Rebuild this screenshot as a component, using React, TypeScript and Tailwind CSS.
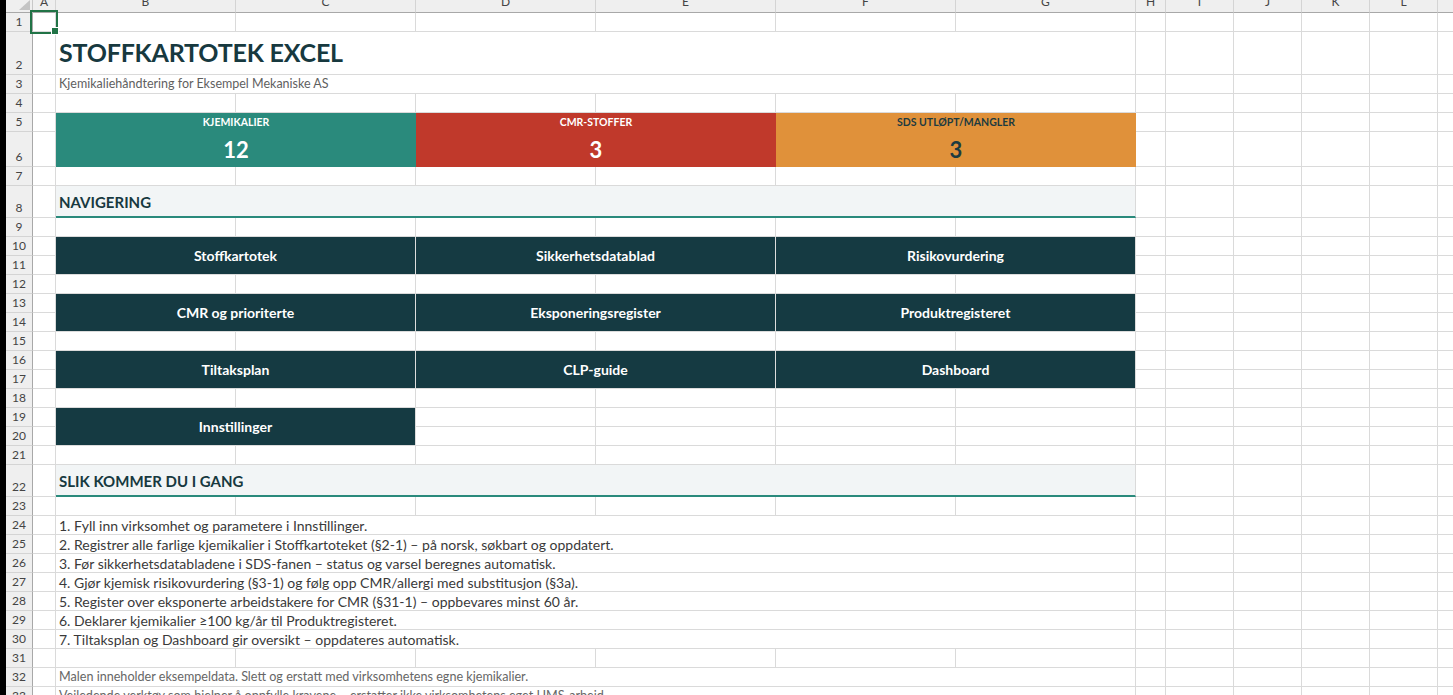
import type { ReactNode } from "react";

const G = "border-[#dadada]";
const H19 = "h-[19px]";
const SIX = [0, 1, 2, 3, 4, 5];
const LETTERS: [string, string][] = [
  ["A", "w-[23px]"],
  ["B", "w-[180px]"],
  ["C", "w-[180px]"],
  ["D", "w-[180px]"],
  ["E", "w-[180px]"],
  ["F", "w-[180px]"],
  ["G", "w-[180px]"],
  ["H", "w-[30px]"],
  ["I", "w-[68px]"],
  ["J", "w-[68px]"],
  ["K", "w-[68px]"],
  ["L", "w-[68px]"],
  ["M", "w-[68px]"],
];

function Col({ w, hs }: { w: string; hs: string[] }) {
  return (
    <div className={`${w} flex shrink-0 flex-col`}>
      {hs.map((h, i) => (
        <div key={i} className={`${h} border-b border-r ${G} bg-white`} />
      ))}
    </div>
  );
}

function Rest({ hs }: { hs: string[] }) {
  return (
    <>
      <Col w="w-[30px]" hs={hs} />
      {[0, 1, 2, 3, 4].map((i) => (
        <Col key={i} w="w-[68px]" hs={hs} />
      ))}
    </>
  );
}

function Band({ rows, children }: { rows: [number, string][]; children: ReactNode }) {
  return (
    <div className="flex">
      <div className="flex w-[27px] shrink-0 flex-col">
        {rows.map(([n, h]) => (
          <div
            key={n}
            className={`${h} flex items-end justify-center border-b border-r border-b-[#d4d4d4] border-r-[#a8a8a8] bg-[#efefef] pb-[1px] text-[12px] leading-[16px] text-[#444]`}
          >
            {n}
          </div>
        ))}
      </div>
      {children}
    </div>
  );
}

function BlankRow({ n }: { n: number }) {
  return (
    <Band rows={[[n, H19]]}>
      <Col w="w-[23px]" hs={[H19]} />
      {SIX.map((i) => (
        <Col key={i} w="w-[180px]" hs={[H19]} />
      ))}
      <Rest hs={[H19]} />
    </Band>
  );
}

function TextRow({ n, h = H19, className = "", children }: { n: number; h?: string; className?: string; children: ReactNode }) {
  return (
    <Band rows={[[n, h]]}>
      <Col w="w-[23px]" hs={[h]} />
      <div className={`${h} flex w-[1080px] shrink-0 items-center whitespace-nowrap border-b border-r ${G} bg-white pl-[3px] ${className}`}>
        {children}
      </div>
      <Rest hs={[h]} />
    </Band>
  );
}

function Heading({ n, title }: { n: number; title: string }) {
  const h = "h-[32px]";
  return (
    <Band rows={[[n, h]]}>
      <Col w="w-[23px]" hs={[h]} />
      <div className="flex h-[32px] w-[1080px] shrink-0 items-center border-b-2 border-r border-b-[#2a8a7c] border-r-[#dadada] bg-[#f2f5f6] pl-[3px] pt-[3px] text-[15px] font-bold text-[#17393f]">
        {title}
      </div>
      <Rest hs={[h]} />
    </Band>
  );
}

function NavRow({ n, items }: { n: number; items: string[] }) {
  const hs = [H19, H19];
  return (
    <Band rows={[[n, H19], [n + 1, H19]]}>
      <Col w="w-[23px]" hs={hs} />
      {items.map((t) => (
        <div
          key={t}
          className="flex h-[38px] w-[360px] shrink-0 items-center justify-center border-b border-r border-[#dcdcdc] bg-[#153a42] text-[14px] font-bold text-white"
        >
          {t}
        </div>
      ))}
      {items.length === 1 &&
        [0, 1, 2, 3].map((i) => <Col key={i} w="w-[180px]" hs={hs} />)}
      <Rest hs={hs} />
    </Band>
  );
}

const stats = [
  { label: "KJEMIKALIER", value: "12", bg: "bg-[#2a8a7c]", fg: "text-white" },
  { label: "CMR-STOFFER", value: "3", bg: "bg-[#c0392b]", fg: "text-white" },
  { label: "SDS UTLØPT/MANGLER", value: "3", bg: "bg-[#e0913a]", fg: "text-[#1d3b40]" },
];

const steps = [
  "1. Fyll inn virksomhet og parametere i Innstillinger.",
  "2. Registrer alle farlige kjemikalier i Stoffkartoteket (§2-1) – på norsk, søkbart og oppdatert.",
  "3. Før sikkerhetsdatabladene i SDS-fanen – status og varsel beregnes automatisk.",
  "4. Gjør kjemisk risikovurdering (§3-1) og følg opp CMR/allergi med substitusjon (§3a).",
  "5. Register over eksponerte arbeidstakere for CMR (§31-1) – oppbevares minst 60 år.",
  "6. Deklarer kjemikalier ≥100 kg/år til Produktregisteret.",
  "7. Tiltaksplan og Dashboard gir oversikt – oppdateres automatisk.",
];

export default function App() {
  return (
    <div className="flex h-[695px] w-[1453px] overflow-hidden bg-white font-['Lato',sans-serif]">
      <div className="w-[6px] shrink-0 bg-black" />
      <div className="relative flex shrink-0 flex-col">
        {/* column headers */}
        <div className="flex h-[13px]">
          <div className="relative h-[13px] w-[27px] shrink-0 border-b border-r border-b-[#a8a8a8] border-r-[#c8c8c8] bg-[#efefef]">
            <svg className="absolute right-[2px] top-0" width="11" height="10" viewBox="0 0 11 10">
              <polygon points="11,0 11,10 0,10" fill="#c4c4c4" />
            </svg>
          </div>
          {LETTERS.map(([l, w]) => (
            <div
              key={l}
              className={`${w} flex h-[13px] shrink-0 justify-center overflow-hidden border-b border-r border-b-[#a8a8a8] border-r-[#d4d4d4] bg-[#efefef] text-[12px] leading-[12px] text-[#444]`}
            >
              <span className="-translate-y-[4px]">{l}</span>
            </div>
          ))}
        </div>

        <BlankRow n={1} />
        <TextRow n={2} h="h-[43px]" className="text-[25px] font-bold tracking-[-0.2px] text-[#17393f]">
          STOFFKARTOTEK EXCEL
        </TextRow>
        <TextRow n={3} className="text-[12.5px] text-[#5f5f5f]">
          Kjemikaliehåndtering for Eksempel Mekaniske AS
        </TextRow>
        <BlankRow n={4} />

        <Band rows={[[5, H19], [6, "h-[35px]"]]}>
          <Col w="w-[23px]" hs={[H19, "h-[35px]"]} />
          {stats.map((s) => (
            <div key={s.label} className={`flex h-[54px] w-[360px] shrink-0 flex-col ${s.bg} ${s.fg} font-bold`}>
              <div className="flex h-[19px] items-center justify-center text-[10.5px]">{s.label}</div>
              <div className="flex h-[35px] items-center justify-center text-[22px]">{s.value}</div>
            </div>
          ))}
          <Rest hs={[H19, "h-[35px]"]} />
        </Band>

        <BlankRow n={7} />
        <Heading n={8} title="NAVIGERING" />
        <BlankRow n={9} />
        <NavRow n={10} items={["Stoffkartotek", "Sikkerhetsdatablad", "Risikovurdering"]} />
        <BlankRow n={12} />
        <NavRow n={13} items={["CMR og prioriterte", "Eksponeringsregister", "Produktregisteret"]} />
        <BlankRow n={15} />
        <NavRow n={16} items={["Tiltaksplan", "CLP-guide", "Dashboard"]} />
        <BlankRow n={18} />
        <NavRow n={19} items={["Innstillinger"]} />
        <BlankRow n={21} />
        <Heading n={22} title="SLIK KOMMER DU I GANG" />
        <BlankRow n={23} />
        {steps.map((s, i) => (
          <TextRow key={s} n={24 + i} className="text-[14px] text-[#3a3a3a]">
            {s}
          </TextRow>
        ))}
        <BlankRow n={31} />
        <TextRow n={32} className="text-[12.6px] text-[#666]">
          Malen inneholder eksempeldata. Slett og erstatt med virksomhetens egne kjemikalier.
        </TextRow>
        <TextRow n={33} className="text-[12.6px] text-[#666]">
          Veiledende verktøy som hjelper å oppfylle kravene – erstatter ikke virksomhetens eget HMS-arbeid.
        </TextRow>

        {/* active cell A1 */}
        <div className="absolute left-[24px] top-[10px] h-[24px] w-[28px] border-2 border-[#217346]" />
        <div className="absolute left-[45px] top-[27px] h-[8px] w-[8px] border border-white bg-[#217346]" />
      </div>
    </div>
  );
}
